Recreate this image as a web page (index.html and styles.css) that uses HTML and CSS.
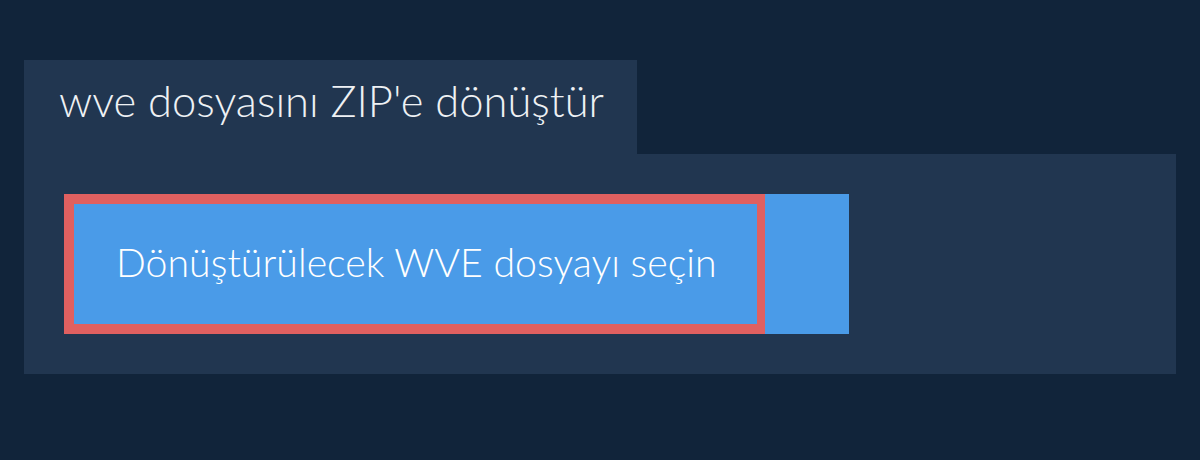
FILE: index.html
```html
<!DOCTYPE html>
<html lang="tr">
<head>
<meta charset="utf-8">
<link rel="stylesheet" href="styles.css">
</head>
<body>
<div class="wrap">
  <div class="tab">wve dosyasını ZIP'e dönüştür</div>
  <div class="panel">
    <div class="picker">
      <div class="label">Dönüştürülecek WVE dosyayı seçin</div>
    </div>
  </div>
</div>
</body>
</html>
```
FILE: styles.css
```css
html, body {
  margin: 0;
  padding: 0;
  background: #11243a;
  font-family: Lato, "Noto Sans", sans-serif;
}
.wrap {
  padding: 60px 24px 0 24px;
}
.tab {
  display: inline-block;
  box-sizing: border-box;
  width: 613px;
  height: 94px;
  padding-left: 35px;
  line-height: 80px;
  background: #213650;
  color: #eef1f4;
  font-size: 43.5px;
  font-weight: 300;
  vertical-align: top;
}
.panel {
  background: #213650;
  padding: 40px;
  height: 140px;
}
.picker {
  width: 785px;
  height: 140px;
  background: #4a9be8;
  display: flex;
}
.label {
  box-sizing: border-box;
  width: 701px;
  height: 140px;
  border: 10px solid #e06060;
  border-right-width: 8px;
  color: #ffffff;
  font-size: 39.3px;
  font-weight: 300;
  display: flex;
  align-items: center;
  padding-left: 42px;
  padding-bottom: 5px;
}
```
